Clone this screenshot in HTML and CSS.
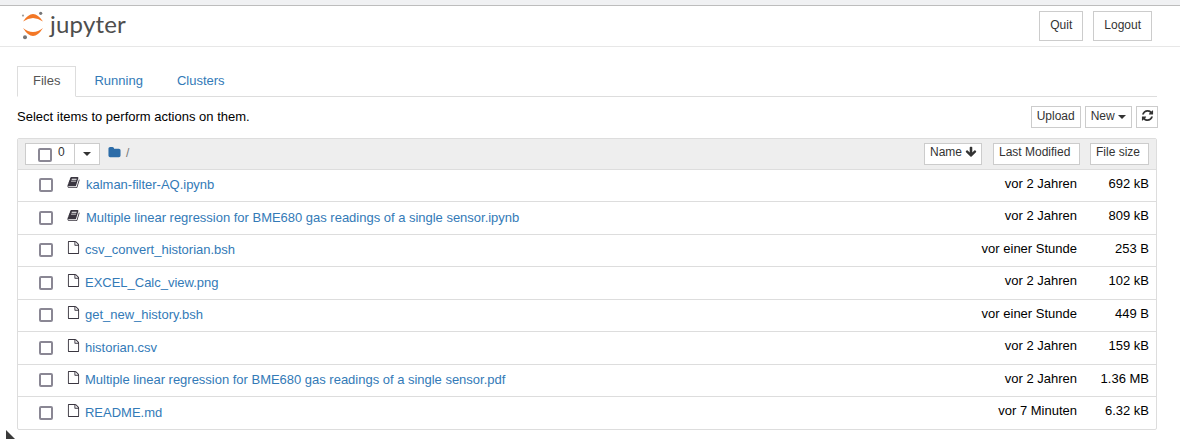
FILE: index.html
```html
<!DOCTYPE html>
<html lang="de">
<head>
<meta charset="utf-8">
<title>Jupyter</title>
<link rel="stylesheet" href="styles.css">
</head>
<body>
<svg class="sprite" width="0" height="0" aria-hidden="true">
  <symbol id="i-book" viewBox="0 0 1792 1792"><path d="M1703 478q40 57 18 129l-275 906q-19 64-76.5 107.5t-122.5 43.5h-923q-77 0-148.5-53.5t-99.5-131.5q-24-67-2-127 0-4 3-27t4-37q1-8-3-21.5t-3-19.5q2-11 8-21t16.5-23.5 16.5-23.5q23-38 45-91.5t30-91.5q3-10 .5-30t-.5-28q3-11 17-28t17-23q21-36 42-92t25-90q1-9-2.5-32t.5-28q4-13 22-30.5t22-22.5q19-26 42.5-84.5t27.5-96.5q1-8-3-25.5t-2-26.5q2-8 9-18t18-23 17-21q8-12 16.5-30.5t15-35 16-36 19.5-32 26.5-23.5 36-11.5 47.5 5.5l-1 3q38-9 51-9h761q74 0 114 56t18 130l-274 906q-36 119-71.5 153.5t-128.5 34.5h-869q-27 0-38 15-11 16-1 43 24 70 144 70h923q29 0 56-15.5t35-41.5l300-987q7-22 5-57 38 15 59 43zm-1064 2q-4 13 2 22.5t20 9.5h608q13 0 25.5-9.5t16.5-22.5l21-64q4-13-2-22.5t-20-9.5h-608q-13 0-25.5 9.5t-16.5 22.5zm-83 256q-4 13 2 22.5t20 9.5h608q13 0 25.5-9.5t16.5-22.5l21-64q4-13-2-22.5t-20-9.5h-608q-13 0-25.5 9.5t-16.5 22.5z"/></symbol>
  <symbol id="i-file" viewBox="0 0 1792 1792"><path d="M1596 380q28 28 48 76t20 88v1152q0 40-28 68t-68 28h-1344q-40 0-68-28t-28-68v-1600q0-40 28-68t68-28h896q40 0 88 20t76 48zm-444-244v376h376q-10-29-22-41l-313-313q-12-12-41-22zm384 1528v-1024h-416q-40 0-68-28t-28-68v-416h-768v1536h1280z"/></symbol>
</svg>

<div class="topstrip"></div>
<header class="header">
  <div class="logo">
    <svg class="logo-mark" viewBox="0 0 28 30" aria-hidden="true">
      <circle cx="19.7" cy="2.3" r="1.6" fill="#767677"/>
      <circle cx="2" cy="4.6" r="1.1" fill="#9e9e9e"/>
      <circle cx="4" cy="26.3" r="2" fill="#767677"/>
      <path d="M2 10.5Q12 -4.5 22 10.5Q12 3.5 2 10.5Z" fill="#f37726"/>
      <path d="M2 17Q12 25 22 17Q12 33 2 17Z" fill="#f37726"/>
    </svg>
    <span class="logo-text">jupyter</span>
  </div>
  <div class="header-actions">
    <button class="btn btn-lg" type="button">Quit</button>
    <button class="btn btn-lg" type="button">Logout</button>
  </div>
</header>

<main class="main">
  <nav class="tabs">
    <a class="tab tab-active">Files</a>
    <a class="tab">Running</a>
    <a class="tab">Clusters</a>
  </nav>

  <div class="toolbar">
    <span>Select items to perform actions on them.</span>
    <div class="toolbar-actions">
      <button class="btn btn-xs" type="button">Upload</button>
      <button class="btn btn-xs" type="button">New <i class="caret caret-new"></i></button>
      <button class="btn btn-xs btn-icon" type="button" aria-label="Refresh">
        <svg viewBox="0 0 1792 1792" width="13" height="13"><path d="M1639 1056q0 5-1 7-64 268-268 434.5t-478 166.5q-146 0-282.5-55t-243.5-157l-129 129q-19 19-45 19t-45-19-19-45v-448q0-26 19-45t45-19h448q26 0 45 19t19 45-19 45l-137 137q71 66 161 102t187 36q134 0 250-65t186-179q11-17 53-117 8-23 30-23h192q13 0 22.5 9.5t9.5 22.5zm25-800v448q0 26-19 45t-45 19h-448q-26 0-45-19t-19-45 19-45l138-138q-148-137-349-137-134 0-250 65t-186 179q-11 17-53 117-8 23-30 23h-199q-13 0-22.5-9.5t-9.5-22.5v-7q65-268 270-434.5t480-166.5q146 0 284 55.5t245 156.5l130-129q19-19 45-19t45 19 19 45z"/></svg>
      </button>
    </div>
  </div>

  <section class="list">
    <div class="list-head">
      <div class="select-group">
        <label class="select-main"><input class="check head-check" type="checkbox"><span class="select-count">0</span></label>
        <span class="select-drop"><i class="caret caret-drop"></i></span>
      </div>
      <svg class="folder" viewBox="0 0 1792 1792" width="13" height="13"><path d="M1728 608v704q0 92-66 158t-158 66h-1216q-92 0-158-66t-66-158v-960q0-92 66-158t158-66h320q92 0 158 66t66 158v32h672q92 0 158 66t66 158z"/></svg>
      <span class="crumb">/</span>
      <div class="sorts">
        <button class="sort sort-name" type="button">Name <svg viewBox="0 0 1792 1792" width="12" height="12"><path d="M1675 832q0 53-37 90l-651 652q-39 37-91 37-53 0-90-37l-651-652q-38-36-38-90 0-53 38-91l74-75q39-37 91-37 53 0 90 37l294 294v-704q0-52 38-90t90-38h128q52 0 90 38t38 90v704l294-294q37-37 90-37 52 0 91 37l75 75q37 39 37 91z"/></svg></button>
        <button class="sort sort-mod" type="button">Last Modified</button>
        <button class="sort sort-size" type="button">File size</button>
      </div>
    </div>

    <div class="row"><input class="check" type="checkbox"><svg class="ficon"><use href="#i-book"/></svg><a class="name nb">kalman-filter-AQ.ipynb</a><span class="mod">vor 2 Jahren</span><span class="size">692 kB</span></div>
    <div class="row"><input class="check" type="checkbox"><svg class="ficon"><use href="#i-book"/></svg><a class="name nb">Multiple linear regression for BME680 gas readings of a single sensor.ipynb</a><span class="mod">vor 2 Jahren</span><span class="size">809 kB</span></div>
    <div class="row"><input class="check" type="checkbox"><svg class="ficon"><use href="#i-file"/></svg><a class="name">csv_convert_historian.bsh</a><span class="mod">vor einer Stunde</span><span class="size">253 B</span></div>
    <div class="row"><input class="check" type="checkbox"><svg class="ficon"><use href="#i-file"/></svg><a class="name">EXCEL_Calc_view.png</a><span class="mod">vor 2 Jahren</span><span class="size">102 kB</span></div>
    <div class="row"><input class="check" type="checkbox"><svg class="ficon"><use href="#i-file"/></svg><a class="name">get_new_history.bsh</a><span class="mod">vor einer Stunde</span><span class="size">449 B</span></div>
    <div class="row"><input class="check" type="checkbox"><svg class="ficon"><use href="#i-file"/></svg><a class="name">historian.csv</a><span class="mod">vor 2 Jahren</span><span class="size">159 kB</span></div>
    <div class="row"><input class="check" type="checkbox"><svg class="ficon"><use href="#i-file"/></svg><a class="name">Multiple linear regression for BME680 gas readings of a single sensor.pdf</a><span class="mod">vor 2 Jahren</span><span class="size">1.36 MB</span></div>
    <div class="row"><input class="check" type="checkbox"><svg class="ficon"><use href="#i-file"/></svg><a class="name">README.md</a><span class="mod">vor 7 Minuten</span><span class="size">6.32 kB</span></div>
  </section>
</main>

<svg class="cursor" viewBox="0 0 10 9" width="10" height="9" aria-hidden="true"><path d="M0 0L9 9H0Z" fill="#3a3a3a"/></svg>
</body>
</html>
```

FILE: styles.css
```css
* { box-sizing: border-box; }

html, body {
  margin: 0;
  height: 439px;
  overflow: hidden;
  background: #fff;
  color: #000;
  font: 13px/18px "Liberation Sans", Arial, sans-serif;
}

.sprite { position: absolute; }

.topstrip {
  height: 6px;
  background: #f0f1f3;
  border-bottom: 1px solid #bdbdbd;
}

.header {
  display: flex;
  justify-content: space-between;
  height: 41px;
  padding: 5px 28px 0 21px;
  border-bottom: 1px solid #e7e7e7;
}

.logo { display: flex; align-items: flex-start; }
.logo-mark { display: block; width: 28px; height: 30px; }
.logo-text {
  margin: 0 0 0 1px;
  font: 24px/26px Lato, sans-serif;
  letter-spacing: 0.2px;
  color: #4e4e4e;
}

.header-actions { display: flex; gap: 10px; }

.btn {
  padding: 0;
  background: #fff;
  border: 1px solid #ccc;
  border-radius: 0;
  color: #333;
  font: inherit;
  font-size: 12px;
}
.btn-lg { height: 30px; padding: 0 10px 2px; line-height: 18px; }
.btn-xs { height: 22px; padding: 0 5px 2px; line-height: 18px; }
.btn-icon { display: flex; align-items: center; justify-content: center; width: 22px; padding: 0 0 3px; }
.btn-icon svg { fill: #333; }

.main { width: 1140px; margin-left: 17px; }

.tabs {
  display: flex;
  height: 50px;
  padding-top: 19px;
  border-bottom: 1px solid #ddd;
}
.tab {
  height: 31px;
  padding: 5px 15px 7px;
  margin-right: 2px;
  color: #337ab7;
  border: 1px solid transparent;
}
.tab-active {
  color: #555;
  background: #fff;
  border-color: #ddd #ddd #fff;
}

.toolbar {
  display: flex;
  justify-content: space-between;
  align-items: center;
  height: 41px;
  padding-bottom: 2px;
}
.toolbar-actions { display: flex; gap: 4px; margin-right: -1px; margin-top: 1px; }

.caret {
  display: inline-block;
  width: 0;
  height: 0;
  margin-left: 1px;
  vertical-align: middle;
  border-top: 4px solid #333;
  border-left: 4px solid transparent;
  border-right: 4px solid transparent;
}
.caret-new { margin-left: 0; }
.caret-drop { margin-left: -1px; }

.list {
  height: 292px;
  overflow: hidden;
  border: 1px solid #ddd;
  border-radius: 2px;
}

.list-head {
  display: flex;
  align-items: center;
  height: 30.5px;
  padding: 0 7px;
  background: #eee;
  border-bottom: 1px solid #ddd;
}

.select-group {
  display: flex;
  height: 22px;
  background: #fff;
  border: 1px solid #ccc;
  color: #333;
  font-size: 12px;
}
.select-main {
  display: flex;
  width: 49px;
  padding-left: 12px;
  border-right: 1px solid #ccc;
}
.select-count { line-height: 16px; }
.select-drop {
  display: flex;
  align-items: center;
  justify-content: center;
  width: 24px;
}

.folder { margin: -2px 0 0 8px; fill: #2c6ca8; }
.crumb { margin: -2px 0 0 5px; color: #777; font-size: 12px; }

.sorts { display: flex; margin-left: auto; }
.sort {
  height: 22px;
  padding: 0 5px 3px;
  background: #fff;
  border: 1px solid #ccc;
  border-radius: 0;
  color: #333;
  font: inherit;
  font-size: 12px;
  line-height: 14px;
  text-align: left;
  white-space: nowrap;
}
.sort svg { vertical-align: -2px; fill: #333; }
.sort-name { width: 58px; margin-right: 11px; }
.sort-mod { width: 87px; margin-right: 10px; }
.sort-size { width: 59px; }

.row {
  display: flex;
  align-items: center;
  height: 32.5px;
  padding: 0 7px 0 21px;
  border-bottom: 1px solid #ddd;
}
.row:last-child { border-bottom-color: transparent; }

.check {
  flex: none;
  width: 14px;
  height: 14px;
  margin: 0 13px 0 0;
  background: #fff;
  border: 2px solid #8a8794;
  border-radius: 2px;
  appearance: none;
}
.head-check { margin: 4px 6px 0 0; }

.ficon { flex: none; width: 13px; height: 15px; margin: -5px 5px 0 1px; fill: #3a3640; }
.name { flex: 1; color: #337ab7; letter-spacing: -0.014px; }
.name.nb { margin-left: 1px; }
.mod { width: 160px; margin-top: -3px; text-align: right; }
.size { width: 72px; margin-top: -3px; text-align: right; }

.cursor { position: absolute; left: 6px; top: 430px; }
```
